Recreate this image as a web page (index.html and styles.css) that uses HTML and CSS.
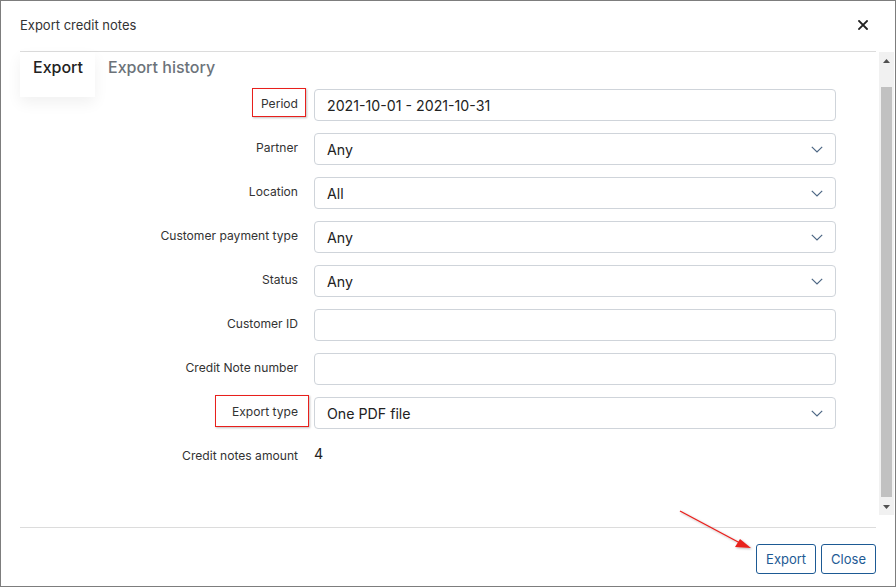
FILE: index.html
```html
<!DOCTYPE html>
<html>
<head>
<meta charset="utf-8">
<link rel="stylesheet" href="styles.css">
</head>
<body>
<div class="modal">
  <div class="modal-header">
    <div class="title">Export credit notes</div>
    <div class="close">
      <svg width="10" height="10" viewBox="0 0 10 10"><path d="M1 1L9 9M9 1L1 9" stroke="#222" stroke-width="1.8" stroke-linecap="square"/></svg>
    </div>
  </div>
  <div class="modal-body">
    <div class="content">
      <div class="tabs">
        <div class="tab active">Export</div>
        <div class="tab">Export history</div>
      </div>
      <div class="form">
        <div class="row">
          <div class="label"><span class="lbl">Period<span class="annot annot-period"></span></span></div>
          <div class="input">2021-10-01 - 2021-10-31</div>
        </div>
        <div class="row">
          <div class="label"><span class="lbl">Partner</span></div>
          <div class="input select">Any<svg class="chev" width="12" height="7" viewBox="0 0 12 7"><path d="M0.8 0.8L6 6L11.2 0.8" fill="none" stroke="#4d6784" stroke-width="1.2"/></svg></div>
        </div>
        <div class="row">
          <div class="label"><span class="lbl">Location</span></div>
          <div class="input select">All<svg class="chev" width="12" height="7" viewBox="0 0 12 7"><path d="M0.8 0.8L6 6L11.2 0.8" fill="none" stroke="#4d6784" stroke-width="1.2"/></svg></div>
        </div>
        <div class="row">
          <div class="label"><span class="lbl">Customer payment type</span></div>
          <div class="input select">Any<svg class="chev" width="12" height="7" viewBox="0 0 12 7"><path d="M0.8 0.8L6 6L11.2 0.8" fill="none" stroke="#4d6784" stroke-width="1.2"/></svg></div>
        </div>
        <div class="row">
          <div class="label"><span class="lbl">Status</span></div>
          <div class="input select">Any<svg class="chev" width="12" height="7" viewBox="0 0 12 7"><path d="M0.8 0.8L6 6L11.2 0.8" fill="none" stroke="#4d6784" stroke-width="1.2"/></svg></div>
        </div>
        <div class="row">
          <div class="label"><span class="lbl">Customer ID</span></div>
          <div class="input"></div>
        </div>
        <div class="row">
          <div class="label"><span class="lbl">Credit Note number</span></div>
          <div class="input"></div>
        </div>
        <div class="row">
          <div class="label"><span class="lbl">Export type<span class="annot annot-type"></span></span></div>
          <div class="input select">One PDF file<svg class="chev" width="12" height="7" viewBox="0 0 12 7"><path d="M0.8 0.8L6 6L11.2 0.8" fill="none" stroke="#4d6784" stroke-width="1.2"/></svg></div>
        </div>
        <div class="row row-static">
          <div class="label"><span class="lbl">Credit notes amount</span></div>
          <div class="value">4</div>
        </div>
      </div>
    </div>
    <div class="scrollbar">
      <div class="sb-arrow"><svg width="7" height="4" viewBox="0 0 7 4"><path d="M0 4L3.5 0L7 4Z" fill="#505050"/></svg></div>
      <div class="sb-track"><div class="sb-thumb"></div></div>
      <div class="sb-arrow"><svg width="7" height="4" viewBox="0 0 7 4"><path d="M0 0L3.5 4L7 0Z" fill="#505050"/></svg></div>
    </div>
  </div>
  <div class="modal-footer">
    <button class="btn">Export</button>
    <button class="btn">Close</button>
  </div>
  <svg class="arrow" width="896" height="587" viewBox="0 0 896 587">
    <defs>
      <filter id="sh" x="-20%" y="-20%" width="140%" height="140%"><feDropShadow dx="1" dy="1" stdDeviation="1" flood-color="#000" flood-opacity="0.3"/></filter>
    </defs>
    <g filter="url(#sh)">
      <line x1="680" y1="511" x2="740" y2="543" stroke="#e8201c" stroke-width="1.2"/>
      <path d="M751 548L735 547L740 539Z" fill="#e8201c"/>
    </g>
  </svg>
</div>
</body>
</html>
```

FILE: styles.css
```css
* { box-sizing: border-box; }
html, body { margin: 0; padding: 0; background: #fff; }
body { font-family: Inter, "Noto Sans", sans-serif; color: #333; }

.modal {
  position: relative;
  width: 896px;
  height: 587px;
  border: 1px solid #7d7d7d;
  background: #fff;
  display: flex;
  flex-direction: column;
}

.modal-header {
  margin: 0 19px;
  height: 51px;
  border-bottom: 1px solid #dcdcdc;
  display: flex;
  align-items: center;
  justify-content: space-between;
}
.title { font-size: 13px; color: #333; padding-bottom: 2px; }
.close { width: 10px; height: 10px; margin-right: 8px; margin-bottom: 2px; display: flex; }

.modal-body {
  height: 463px;
  display: flex;
  padding-left: 19px;
}
.content { flex: 1; padding-right: 5px; }

.tabs {
  height: 37px;
  display: flex;
  align-items: flex-start;
}
.tab {
  font-size: 16px;
  font-weight: 500;
  color: #6c737a;
  padding: 5px 13px 0 13px;
  height: 45px;
}
.tab.active {
  color: #222;
  background: #fff;
  box-shadow: 0 6px 14px rgba(0,0,0,0.06);
  width: 75px;
  position: relative;
  z-index: 0;
}

.form { display: flex; flex-direction: column; gap: 12px; position: relative; z-index: 1; }
.row { display: flex; align-items: center; height: 32px; }
.label {
  width: 278px;
  text-align: right;
  font-size: 12.1px;
  color: #333;
  margin-right: 16px;
  padding-bottom: 4px;
}
.lbl { position: relative; }
.annot {
  position: absolute;
  border: 1.5px solid #e8201c;
  box-shadow: 1px 1px 2px rgba(0,0,0,0.25);
}
.annot-period { left: -9px; right: -8px; top: -8px; bottom: -6px; }
.annot-type { left: -17px; right: -11px; top: -9px; bottom: -8px; }

.input {
  width: 522px;
  height: 32px;
  border: 1px solid #cfd4da;
  border-radius: 4px;
  padding: 0 12px;
  font-size: 14.2px;
  color: #222;
  display: flex;
  align-items: center;
  justify-content: space-between;
  background: #fff;
}
.chev { margin-right: 0px; }
.row-static { margin-top: 0; }
.value { font-size: 14.2px; color: #222; padding-bottom: 8px; }

.scrollbar {
  width: 15px;
  margin-right: 1px;
  background: #f1f1f1;
  display: flex;
  flex-direction: column;
}
.sb-arrow { height: 17px; display: flex; align-items: center; justify-content: center; }
.sb-track { flex: 1; padding: 18px 2px 0 2px; }
.sb-thumb { background: #c1c1c1; height: 410px; }

.modal-footer {
  margin: 12px 19px 0 19px;
  border-top: 1px solid #dcdcdc;
  padding-top: 16px;
  display: flex;
  justify-content: flex-end;
  gap: 5px;
}
.btn {
  font-family: Inter, "Noto Sans", sans-serif;
  font-size: 13px;
  color: #1d5a94;
  background: #fff;
  border: 1px solid #1d5a94;
  border-radius: 3px;
  height: 30px;
  padding: 0 9px;
}

.arrow { position: absolute; left: -1px; top: -1px; pointer-events: none; }
```
